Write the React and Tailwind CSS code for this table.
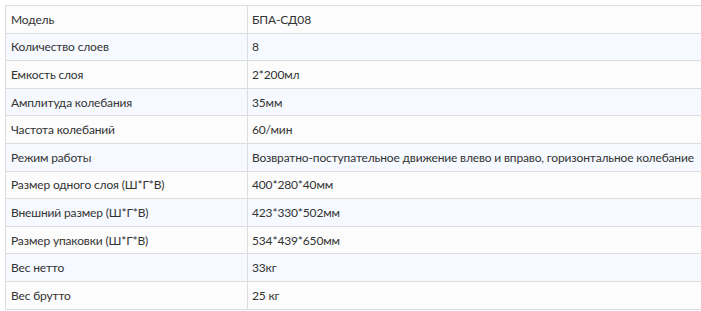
import React from 'react';

const rows = [
  ['Модель', 'БПА-СД08'],
  ['Количество слоев', '8'],
  ['Емкость слоя', '2*200мл'],
  ['Амплитуда колебания', '35мм'],
  ['Частота колебаний', '60/мин'],
  ['Режим работы', 'Возвратно-поступательное движение влево и вправо, горизонтальное колебание'],
  ['Размер одного слоя (Ш*Г*В)', '400*280*40мм'],
  ['Внешний размер (Ш*Г*В)', '423*330*502мм'],
  ['Размер упаковки (Ш*Г*В)', '534*439*650мм'],
  ['Вес нетто', '33кг'],
  ['Вес брутто', '25 кг'],
];

export default function App() {
  return (
    <div className="h-[311px] w-[701px] overflow-hidden bg-white pl-[5px] pt-[5px]" style={{ fontFamily: 'Lato, "Noto Sans", sans-serif' }}>
      <div className="w-[720px] border-l border-t border-[#dddddd] text-[12px] tracking-[-0.15px] text-[#333333]">
        {rows.map(([k, v], i) => (
          <div key={k} className={`flex h-[27.6px] items-center border-b border-[#dddddd] ${i % 2 ? 'bg-[#f6f9ff]' : 'bg-[#fcfcfc]'}`}>
            <div className="flex h-full w-[242px] shrink-0 items-center border-r border-[#dddddd] pl-[5px] pt-px">{k}</div>
            <div className="whitespace-nowrap pl-[4px] pt-px">{v}</div>
          </div>
        ))}
      </div>
    </div>
  );
}
